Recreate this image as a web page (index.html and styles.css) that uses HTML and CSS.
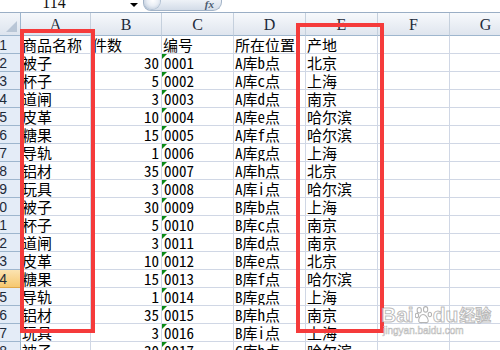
FILE: index.html
```html
<!DOCTYPE html>
<html lang="zh">
<head>
<meta charset="utf-8">
<link rel="stylesheet" href="styles.css">
</head>
<body>
<div class="topbar">
  <div class="namebox"><span>114</span></div>
  <div class="arrow"></div>
  <div class="fxbtn"><span class="ball"></span><span class="fx">fx</span></div>
</div>
<div class="sheet">
  <div class="corner"></div><div class="ch">A</div><div class="ch">B</div><div class="ch">C</div><div class="ch">D</div><div class="ch">E</div><div class="ch">F</div><div class="ch">G</div>

  <div class="rh"><span>1</span></div><div class="c">商品名称</div><div class="c">件数</div><div class="c">编号</div><div class="c">所在位置</div><div class="c">产地</div><div class="c"></div><div class="c"></div>
  <div class="rh"><span>2</span></div><div class="c">被子</div><div class="c num">30</div><div class="c code">0001</div><div class="c">A库b点</div><div class="c">北京</div><div class="c"></div><div class="c"></div>
  <div class="rh"><span>3</span></div><div class="c">杯子</div><div class="c num">5</div><div class="c code">0002</div><div class="c">A库c点</div><div class="c">上海</div><div class="c"></div><div class="c"></div>
  <div class="rh"><span>4</span></div><div class="c">道闸</div><div class="c num">3</div><div class="c code">0003</div><div class="c">A库d点</div><div class="c">南京</div><div class="c"></div><div class="c"></div>
  <div class="rh"><span>5</span></div><div class="c">皮革</div><div class="c num">10</div><div class="c code">0004</div><div class="c">A库e点</div><div class="c">哈尔滨</div><div class="c"></div><div class="c"></div>
  <div class="rh"><span>6</span></div><div class="c">糖果</div><div class="c num">15</div><div class="c code">0005</div><div class="c">A库f点</div><div class="c">哈尔滨</div><div class="c"></div><div class="c"></div>
  <div class="rh"><span>7</span></div><div class="c">导轨</div><div class="c num">1</div><div class="c code">0006</div><div class="c">A库g点</div><div class="c">上海</div><div class="c"></div><div class="c"></div>
  <div class="rh"><span>8</span></div><div class="c">铝材</div><div class="c num">35</div><div class="c code">0007</div><div class="c">A库h点</div><div class="c">北京</div><div class="c"></div><div class="c"></div>
  <div class="rh"><span>9</span></div><div class="c">玩具</div><div class="c num">3</div><div class="c code">0008</div><div class="c">A库i点</div><div class="c">哈尔滨</div><div class="c"></div><div class="c"></div>
  <div class="rh"><span>10</span></div><div class="c">被子</div><div class="c num">30</div><div class="c code">0009</div><div class="c">B库b点</div><div class="c">上海</div><div class="c"></div><div class="c"></div>
  <div class="rh"><span>11</span></div><div class="c">杯子</div><div class="c num">5</div><div class="c code">0010</div><div class="c">B库c点</div><div class="c">南京</div><div class="c"></div><div class="c"></div>
  <div class="rh"><span>12</span></div><div class="c">道闸</div><div class="c num">3</div><div class="c code">0011</div><div class="c">B库d点</div><div class="c">南京</div><div class="c"></div><div class="c"></div>
  <div class="rh"><span>13</span></div><div class="c">皮革</div><div class="c num">10</div><div class="c code">0012</div><div class="c">B库e点</div><div class="c">北京</div><div class="c"></div><div class="c"></div>
  <div class="rh sel"><span>14</span></div><div class="c">糖果</div><div class="c num">15</div><div class="c code">0013</div><div class="c">B库f点</div><div class="c">哈尔滨</div><div class="c"></div><div class="c"></div>
  <div class="rh"><span>15</span></div><div class="c">导轨</div><div class="c num">1</div><div class="c code">0014</div><div class="c">B库g点</div><div class="c">上海</div><div class="c"></div><div class="c"></div>
  <div class="rh"><span>16</span></div><div class="c">铝材</div><div class="c num">35</div><div class="c code">0015</div><div class="c">B库h点</div><div class="c">南京</div><div class="c"></div><div class="c"></div>
  <div class="rh"><span>17</span></div><div class="c">玩具</div><div class="c num">3</div><div class="c code">0016</div><div class="c">B库i点</div><div class="c">上海</div><div class="c"></div><div class="c"></div>
  <div class="rh"><span>18</span></div><div class="c">被子</div><div class="c num">30</div><div class="c code">0017</div><div class="c">C库b点</div><div class="c">哈尔滨</div><div class="c"></div><div class="c"></div>
</div>
<div class="mark mark1"></div>
<div class="mark mark2"></div>
<div class="watermark">
  <div class="wm-top"><span>Bai</span><svg class="paw" width="17" height="18" viewBox="0 0 16 17"><g fill="rgba(255,255,255,0.8)" stroke="rgba(130,130,130,0.6)" stroke-width="1"><ellipse cx="4" cy="4" rx="2" ry="2.6"/><ellipse cx="10" cy="3.2" rx="2" ry="2.6"/><ellipse cx="1.8" cy="9" rx="1.6" ry="2.1"/><ellipse cx="14" cy="8" rx="1.6" ry="2.1"/><path d="M7.5 8 C5 8 3 12 3.5 14.5 C4 16.5 6.5 15.5 8 15.5 C9.5 15.5 12.5 16.5 12.5 14 C12.5 11.5 10 8 7.5 8 Z"/></g></svg><span>du</span><span class="cn">经验</span></div>
  <div class="wm-url">jingyan.baidu.com</div>
</div>
</body>
</html>
```

FILE: styles.css
```css
html, body {
  margin: 0;
  padding: 0;
}
body {
  width: 500px;
  height: 350px;
  overflow: hidden;
  background: #ffffff;
  position: relative;
  font-family: "Noto Sans Mono CJK SC", "Noto Sans CJK SC", monospace;
  color: #000;
}

.topbar {
  height: 12px;
  display: flex;
  align-items: flex-start;
  overflow: hidden;
  background: #ffffff;
}
.namebox {
  width: 108px;
  height: 12px;
  text-align: center;
  overflow: hidden;
}
.namebox span {
  display: block;
  font-family: "Liberation Serif", serif;
  font-size: 16px;
  line-height: 16px;
  margin-top: -5px;
  color: #111;
}
.arrow {
  width: 0;
  height: 0;
  margin-left: 22px;
  margin-top: 3px;
  border-top: 4px solid #000;
  border-left: 4px solid transparent;
  border-right: 4px solid transparent;
}
.fxbtn {
  margin-left: 5px;
  width: 79px;
  height: 11px;
  box-sizing: border-box;
  border: 1px solid #a3b4c8;
  border-top: none;
  border-radius: 0 0 9px 8px;
  background: linear-gradient(#eef2f7, #d3dce8);
  display: flex;
  justify-content: space-between;
  align-items: flex-start;
  overflow: hidden;
}
.ball {
  width: 16px;
  height: 16px;
  margin-top: -7px;
  border-radius: 50%;
  background: radial-gradient(circle at 55% 45%, #ffffff 0, #e9eef5 45%, #aebdd0 100%);
  box-shadow: 0 0 0 1px #b3c2d4;
}
.fx {
  font-family: "Liberation Serif", serif;
  font-style: italic;
  font-weight: bold;
  font-size: 11px;
  line-height: 9px;
  margin-right: 7px;
  color: #4a5a70;
}

.sheet {
  display: grid;
  grid-template-columns: 21px 70px 71px 72px 72px 72px 72px 72px;
  grid-template-rows: 23px;
  grid-auto-rows: 18px;
  border-top: 1px solid #9aaec5;
}
.sheet > div {
  box-sizing: border-box;
  overflow: hidden;
  white-space: nowrap;
}
.corner {
  background: linear-gradient(#f2f5f9, #dde4ee);
  border-right: 1px solid #9eb6ce;
  border-bottom: 1px solid #9eb6ce;
  position: relative;
}
.corner::after {
  content: "";
  position: absolute;
  right: 3px;
  bottom: 3px;
  border-left: 11px solid transparent;
  border-bottom: 11px solid #b9c6d6;
}
.ch {
  background: linear-gradient(#f7f9fc, #dfe5ee);
  border-right: 1px solid #c5d0dd;
  border-bottom: 1px solid #9eb6ce;
  text-align: center;
  font-family: "Liberation Serif", serif;
  font-size: 16px;
  line-height: 16px;
  padding-top: 4px;
  color: #1d2a3a;
}
.rh {
  background: #e4ecf7;
  border-right: 1px solid #9eb6ce;
  border-bottom: 1px solid #9eb6ce;
  display: flex;
  justify-content: flex-end;
  padding-right: 13px;
  font-family: "Liberation Sans", sans-serif;
  font-size: 14px;
  line-height: 18px;
  color: #1d2a3a;
}
.rh span {
  flex: none;
}
.rh.sel {
  background: linear-gradient(#fbe3b1, #f6c870);
  border-bottom-color: #e0a84a;
}
.c {
  border-right: 1px solid #d0d7e5;
  border-bottom: 1px solid #d0d7e5;
  font-size: 15px;
  line-height: 18px;
  padding-left: 1px;
}
.num {
  text-align: right;
  padding-right: 2px;
}
.code {
  position: relative;
  padding-left: 2px;
}
.code::before {
  content: "";
  position: absolute;
  left: 0;
  top: 0;
  border-top: 5px solid #0a8a16;
  border-right: 5px solid transparent;
}

.mark {
  position: absolute;
  box-sizing: border-box;
  border: 4px solid #f53b3b;
}
.mark1 {
  left: 20px;
  top: 29px;
  width: 75px;
  height: 304px;
}
.mark2 {
  left: 296px;
  top: 23px;
  width: 88px;
  height: 310px;
}

.watermark {
  position: absolute;
  left: 381px;
  top: 304px;
  font-family: "Liberation Sans", sans-serif;
  color: rgba(255, 255, 255, 0.8);
  -webkit-text-stroke: 1px rgba(130, 130, 130, 0.55);
}
.wm-top {
  display: flex;
  align-items: center;
  font-size: 21px;
  font-weight: bold;
  line-height: 21px;
}
.paw {
  margin: 0 1px;
}
.wm-top .cn {
  font-family: "Noto Sans CJK SC", sans-serif;
  font-size: 16px;
  margin-left: 1px;
}
.wm-url {
  font-size: 10px;
  line-height: 11px;
  margin-left: 2px;
  -webkit-text-stroke: 0.6px rgba(130, 130, 130, 0.55);
}
```
